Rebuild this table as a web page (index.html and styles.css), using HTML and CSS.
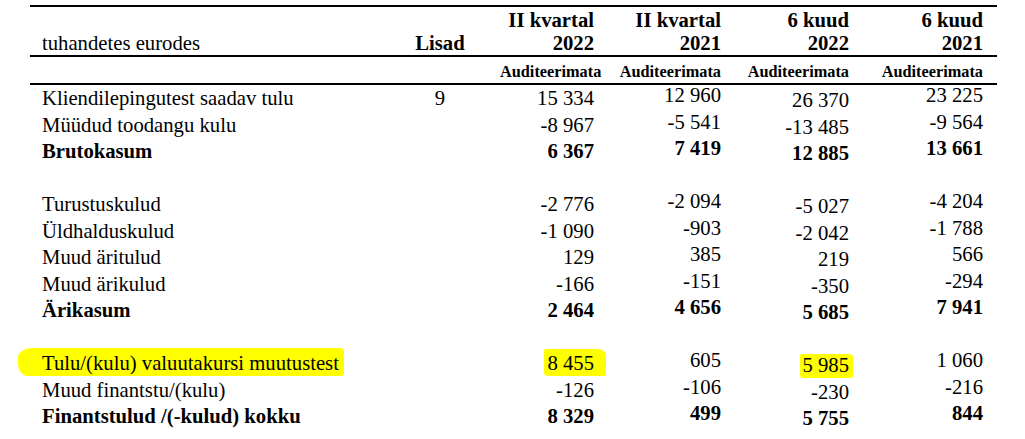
FILE: index.html
```html
<!DOCTYPE html>
<html lang="et">
<head>
<meta charset="utf-8">
<title>Kasumiaruanne</title>
<link rel="stylesheet" href="styles.css">
</head>
<body>
<table class="pl">
  <colgroup>
    <col class="c-label">
    <col class="c-note">
    <col class="c-n1">
    <col class="c-n2">
    <col class="c-n3">
    <col class="c-n4">
  </colgroup>
  <thead>
    <tr class="head">
      <th class="label unit">tuhandetes eurodes</th>
      <th class="note">Lisad</th>
      <th class="num n1">II kvartal<br>2022</th>
      <th class="num n2">II kvartal<br>2021</th>
      <th class="num n3">6 kuud<br>2022</th>
      <th class="num n4">6 kuud<br>2021</th>
    </tr>
    <tr class="audit">
      <td></td>
      <td></td>
      <td class="num n1">Auditeerimata</td>
      <td class="num n2">Auditeerimata</td>
      <td class="num n3">Auditeerimata</td>
      <td class="num n4">Auditeerimata</td>
    </tr>
  </thead>
  <tbody>
    <tr class="first">
      <td class="label">Kliendilepingutest saadav tulu</td>
      <td class="note">9</td>
      <td class="num n1">15 334</td>
      <td class="num n2 up">12 960</td>
      <td class="num n3 down">26 370</td>
      <td class="num n4 up">23 225</td>
    </tr>
    <tr>
      <td class="label">Müüdud toodangu kulu</td>
      <td class="note"></td>
      <td class="num n1">-8 967</td>
      <td class="num n2 up">-5 541</td>
      <td class="num n3 down">-13 485</td>
      <td class="num n4 up">-9 564</td>
    </tr>
    <tr class="total">
      <td class="label">Brutokasum</td>
      <td class="note"></td>
      <td class="num n1">6 367</td>
      <td class="num n2 up">7 419</td>
      <td class="num n3 down">12 885</td>
      <td class="num n4 up">13 661</td>
    </tr>
    <tr class="gap"><td colspan="6">&nbsp;</td></tr>
    <tr>
      <td class="label">Turustuskulud</td>
      <td class="note"></td>
      <td class="num n1">-2 776</td>
      <td class="num n2 up">-2 094</td>
      <td class="num n3 down">-5 027</td>
      <td class="num n4 up">-4 204</td>
    </tr>
    <tr>
      <td class="label">Üldhalduskulud</td>
      <td class="note"></td>
      <td class="num n1">-1 090</td>
      <td class="num n2 up">-903</td>
      <td class="num n3 down">-2 042</td>
      <td class="num n4 up">-1 788</td>
    </tr>
    <tr>
      <td class="label">Muud äritulud</td>
      <td class="note"></td>
      <td class="num n1">129</td>
      <td class="num n2 up">385</td>
      <td class="num n3 down">219</td>
      <td class="num n4 up">566</td>
    </tr>
    <tr>
      <td class="label">Muud ärikulud</td>
      <td class="note"></td>
      <td class="num n1">-166</td>
      <td class="num n2 up">-151</td>
      <td class="num n3 down">-350</td>
      <td class="num n4 up">-294</td>
    </tr>
    <tr class="total">
      <td class="label">Ärikasum</td>
      <td class="note"></td>
      <td class="num n1">2 464</td>
      <td class="num n2 up">4 656</td>
      <td class="num n3 down">5 685</td>
      <td class="num n4 up">7 941</td>
    </tr>
    <tr class="gap"><td colspan="6">&nbsp;</td></tr>
    <tr>
      <td class="label"><span class="mark mark-label">Tulu/(kulu) valuutakursi muutustest</span></td>
      <td class="note"></td>
      <td class="num n1"><span class="mark mark-a">8 455</span></td>
      <td class="num n2 up">605</td>
      <td class="num n3 down"><span class="mark mark-b">5 985</span></td>
      <td class="num n4 up">1 060</td>
    </tr>
    <tr>
      <td class="label">Muud finantstu/(kulu)</td>
      <td class="note"></td>
      <td class="num n1">-126</td>
      <td class="num n2 up">-106</td>
      <td class="num n3 down">-230</td>
      <td class="num n4 up">-216</td>
    </tr>
    <tr class="total">
      <td class="label">Finantstulud /(-kulud) kokku</td>
      <td class="note"></td>
      <td class="num n1">8 329</td>
      <td class="num n2 up">499</td>
      <td class="num n3 down">5 755</td>
      <td class="num n4 up">844</td>
    </tr>
  </tbody>
</table>
</body>
</html>
```

FILE: styles.css
```css
html, body {
  margin: 0;
  padding: 0;
  background: #ffffff;
}

body {
  font-family: "Liberation Serif", "Times New Roman", serif;
  color: #000000;
  font-size: 20.7px;
}

.pl {
  border-collapse: collapse;
  margin: 5px 0 0 30px;
  table-layout: fixed;
  width: 967px;
}

.c-label { width: 350px; }
.c-note { width: 120px; }
.c-n1 { width: 100px; }
.c-n2 { width: 127px; }
.c-n3 { width: 128px; }
.c-n4 { width: 142px; }

.pl th,
.pl td {
  padding: 0;
  white-space: nowrap;
}

.head th {
  border-top: 2px solid #000;
  border-bottom: 2px solid #000;
  font-weight: bold;
  line-height: 23px;
  vertical-align: bottom;
  padding-top: 2px;
  padding-bottom: 0;
}

.head .unit {
  font-weight: normal;
  text-align: left;
}

.label {
  padding-left: 12px !important;
  text-align: left;
}

.note {
  text-align: center;
}

.num {
  text-align: right;
  padding-right: 6px !important;
}

.num.n4 {
  padding-right: 14px !important;
}

.audit td {
  border-bottom: 2px solid #000;
  font-weight: bold;
  font-size: 16.3px;
  line-height: 16px;
  height: 23px;
  vertical-align: bottom;
  padding-bottom: 3px;
}

tbody td {
  line-height: 26.5px;
  vertical-align: top;
}

tbody td.up {
  line-height: 20.5px;
}

tbody td.down {
  line-height: 22.5px;
  vertical-align: bottom;
}

.total td {
  font-weight: bold;
}

.mark {
  background: #ffff00;
}

.mark-label {
  padding: 4px 5px 2px 24px;
  margin-left: -24px;
  border-radius: 14px 4px 3px 10px / 9px 4px 3px 12px;
}

.mark-a {
  padding: 3px 12px 2px 3px;
  margin-right: -12px;
  border-radius: 2px 8px 2px 4px / 2px 6px 2px 4px;
}

.mark-b {
  padding: 0 4px 2px 2px;
  margin-right: -4px;
  border-radius: 2px 4px 2px 3px;
}
```
